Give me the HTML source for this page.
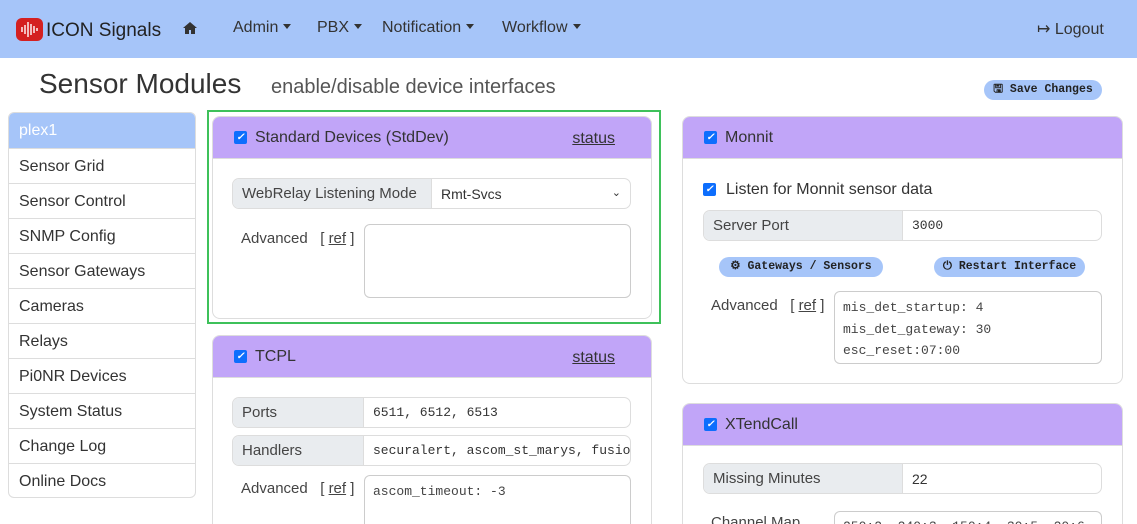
<!DOCTYPE html>
<html style="width:1137px;height:524px;overflow:hidden"><head><meta charset="utf-8"><style>
*{box-sizing:border-box;margin:0;padding:0}
body{width:1137px;height:524px;overflow:hidden;background:#fff;font-family:"Liberation Sans",sans-serif;color:#333;position:relative}
.a{position:absolute}
.nav{left:0;top:0;width:1137px;height:58px;background:#a6c5f9}
.nav span{position:absolute;top:19px;font-size:16px;color:#333}
.car{display:inline-block;border-left:4px solid transparent;border-right:4px solid transparent;border-top:5px solid #333;margin-left:5px;vertical-align:3px}
.side{left:8px;top:112px;width:188px;height:386px;border:1px solid #ddd;border-radius:6px;overflow:hidden}
.side div{height:35px;border-bottom:1px solid #ddd;padding:9px 10px;font-size:16px;color:#333}
.side div:first-child{background:#a6c5f9;color:#fff;height:36px}
.card{border:1px solid #ddd;border-radius:8px;overflow:hidden;background:#fff}
.hd{height:42px;background:#c1a5f8;padding:12px 0 0 42px;font-size:16px;position:relative;border-bottom:1px solid #ddd}
.cb{position:absolute;width:13px;height:13px;background:#0d6efd;border-radius:2px;color:#fff;font-size:10px;line-height:13px;text-align:center;font-weight:bold}
.st{position:absolute;right:36px;top:13px;text-decoration:underline;font-size:16px}
.grp{position:absolute;height:31px;border:1px solid #ddd;border-radius:7px;overflow:hidden;display:flex;font-size:15px}
.grp .l{background:#e9ecef;border-right:1px solid #ddd;padding:6px 9px;color:#444;flex-shrink:0}
.grp .v{padding:7px 9px;font-family:"Liberation Mono",monospace;font-size:13px;white-space:nowrap;overflow:hidden;flex:1}
.ta{position:absolute;border:1px solid #ccc;border-radius:6px;font-family:"Liberation Mono",monospace;font-size:13px;line-height:21.5px;padding:5px 8px;color:#444;overflow:hidden}
.adv{position:absolute;font-size:15px;color:#444}
.adv u{text-decoration:underline}
.btn{position:absolute;background:#a6c5f9;border-radius:10px;height:20px;font-family:"Liberation Mono",monospace;font-weight:bold;font-size:11.5px;line-height:20px;text-align:center;color:#222;white-space:nowrap}
</style></head><body>
<div class="a nav">
 <div class="a" style="left:16px;top:18px;width:27px;height:23px;background:#d42020;border-radius:6px"><svg width="27" height="23"><g stroke="#fff" stroke-width="1.4"><line x1="6" y1="9" x2="6" y2="14"/><line x1="9" y1="7" x2="9" y2="16"/><line x1="12" y1="4" x2="12" y2="19"/><line x1="15" y1="6" x2="15" y2="17"/><line x1="18" y1="8" x2="18" y2="15"/><line x1="21" y1="10" x2="21" y2="13"/></g></svg></div>
 <span style="left:46px;top:20px;font-size:19px;color:#222">ICON Signals</span>
 <span style="left:182px;top:21px"><svg width="16" height="14"><path d="M8 1L1 7h2v6h4V9h2v4h4V7h2z" fill="#333"/></svg></span>
 <span style="left:233px">Admin<i class="car"></i></span>
 <span style="left:317px">PBX<i class="car"></i></span>
 <span style="left:382px">Notification<i class="car"></i></span>
 <span style="left:502px">Workflow<i class="car"></i></span>
 <span style="left:1037px">&#x21A6; Logout</span>
</div>
<div class="a" style="left:39px;top:68px;font-size:28px;color:#333">Sensor Modules</div>
<div class="a" style="left:271px;top:76px;font-size:20px;color:#555">enable/disable device interfaces</div>
<div class="btn" style="left:984px;top:80px;width:118px">&#x1F5AB; Save Changes</div>
<div class="a side"><div>plex1</div><div>Sensor Grid</div><div>Sensor Control</div><div>SNMP Config</div><div>Sensor Gateways</div><div>Cameras</div><div>Relays</div><div>Pi0NR Devices</div><div>System Status</div><div>Change Log</div><div style="border:none">Online Docs</div></div>

<div class="a" style="left:207px;top:110px;width:454px;height:214px;border:2px solid #3ec15a"></div>
<div class="a card" style="left:212px;top:116px;width:440px;height:203px">
 <div class="hd"><i class="cb" style="left:21px;top:14px">✓</i>Standard Devices (StdDev)<span class="st">status</span></div>
</div>
<div class="grp" style="left:232px;top:178px;width:399px"><div class="l" style="width:199px">WebRelay Listening Mode</div><div class="v" style="font-family:'Liberation Sans';font-size:14px">Rmt-Svcs<span style="float:right;font-size:11px">&#x2304;</span></div></div>
<div class="adv" style="left:241px;top:230px">Advanced &nbsp;&nbsp;[ <u>ref</u> ]</div>
<div class="ta" style="left:364px;top:224px;width:267px;height:74px"></div>

<div class="a card" style="left:212px;top:335px;width:440px;height:200px">
 <div class="hd"><i class="cb" style="left:21px;top:14px">✓</i>TCPL<span class="st">status</span></div>
</div>
<div class="grp" style="left:232px;top:397px;width:399px"><div class="l" style="width:131px">Ports</div><div class="v">6511, 6512, 6513</div></div>
<div class="grp" style="left:232px;top:435px;width:399px"><div class="l" style="width:131px">Handlers</div><div class="v">securalert, ascom_st_marys, fusion</div></div>
<div class="adv" style="left:241px;top:480px">Advanced &nbsp;&nbsp;[ <u>ref</u> ]</div>
<div class="ta" style="left:364px;top:475px;width:267px;height:49px;border-bottom:none;border-radius:6px 6px 0 0">ascom_timeout: -3</div>

<div class="a card" style="left:682px;top:116px;width:441px;height:268px">
 <div class="hd"><i class="cb" style="left:21px;top:14px">✓</i>Monnit</div>
</div>
<i class="cb" style="left:703px;top:183px">✓</i>
<div class="a" style="left:726px;top:181px;font-size:16px">Listen for Monnit sensor data</div>
<div class="grp" style="left:703px;top:210px;width:399px"><div class="l" style="width:199px">Server Port</div><div class="v">3000</div></div>
<div class="btn" style="left:719px;top:257px;width:164px">&#x2699; Gateways / Sensors</div>
<div class="btn" style="left:934px;top:257px;width:151px">&#x23FB; Restart Interface</div>
<div class="adv" style="left:711px;top:297px">Advanced &nbsp;&nbsp;[ <u>ref</u> ]</div>
<div class="ta" style="left:834px;top:291px;width:268px;height:73px">mis_det_startup: 4<br>mis_det_gateway: 30<br>esc_reset:07:00</div>

<div class="a card" style="left:682px;top:403px;width:441px;height:121px;border-bottom:none;border-radius:8px 8px 0 0">
 <div class="hd"><i class="cb" style="left:21px;top:14px">✓</i>XTendCall</div>
</div>
<div class="grp" style="left:703px;top:463px;width:399px"><div class="l" style="width:199px">Missing Minutes</div><div class="v" style="font-family:'Liberation Sans';font-size:14px">22</div></div>
<div class="adv" style="left:711px;top:514px">Channel Map</div>
<div class="ta" style="left:834px;top:511px;width:268px;height:13px;border-bottom:none;border-radius:6px 6px 0 0;padding-top:4px">250:2, 240:3, 150:4, 30:5, 20:6</div>
</body></html>
